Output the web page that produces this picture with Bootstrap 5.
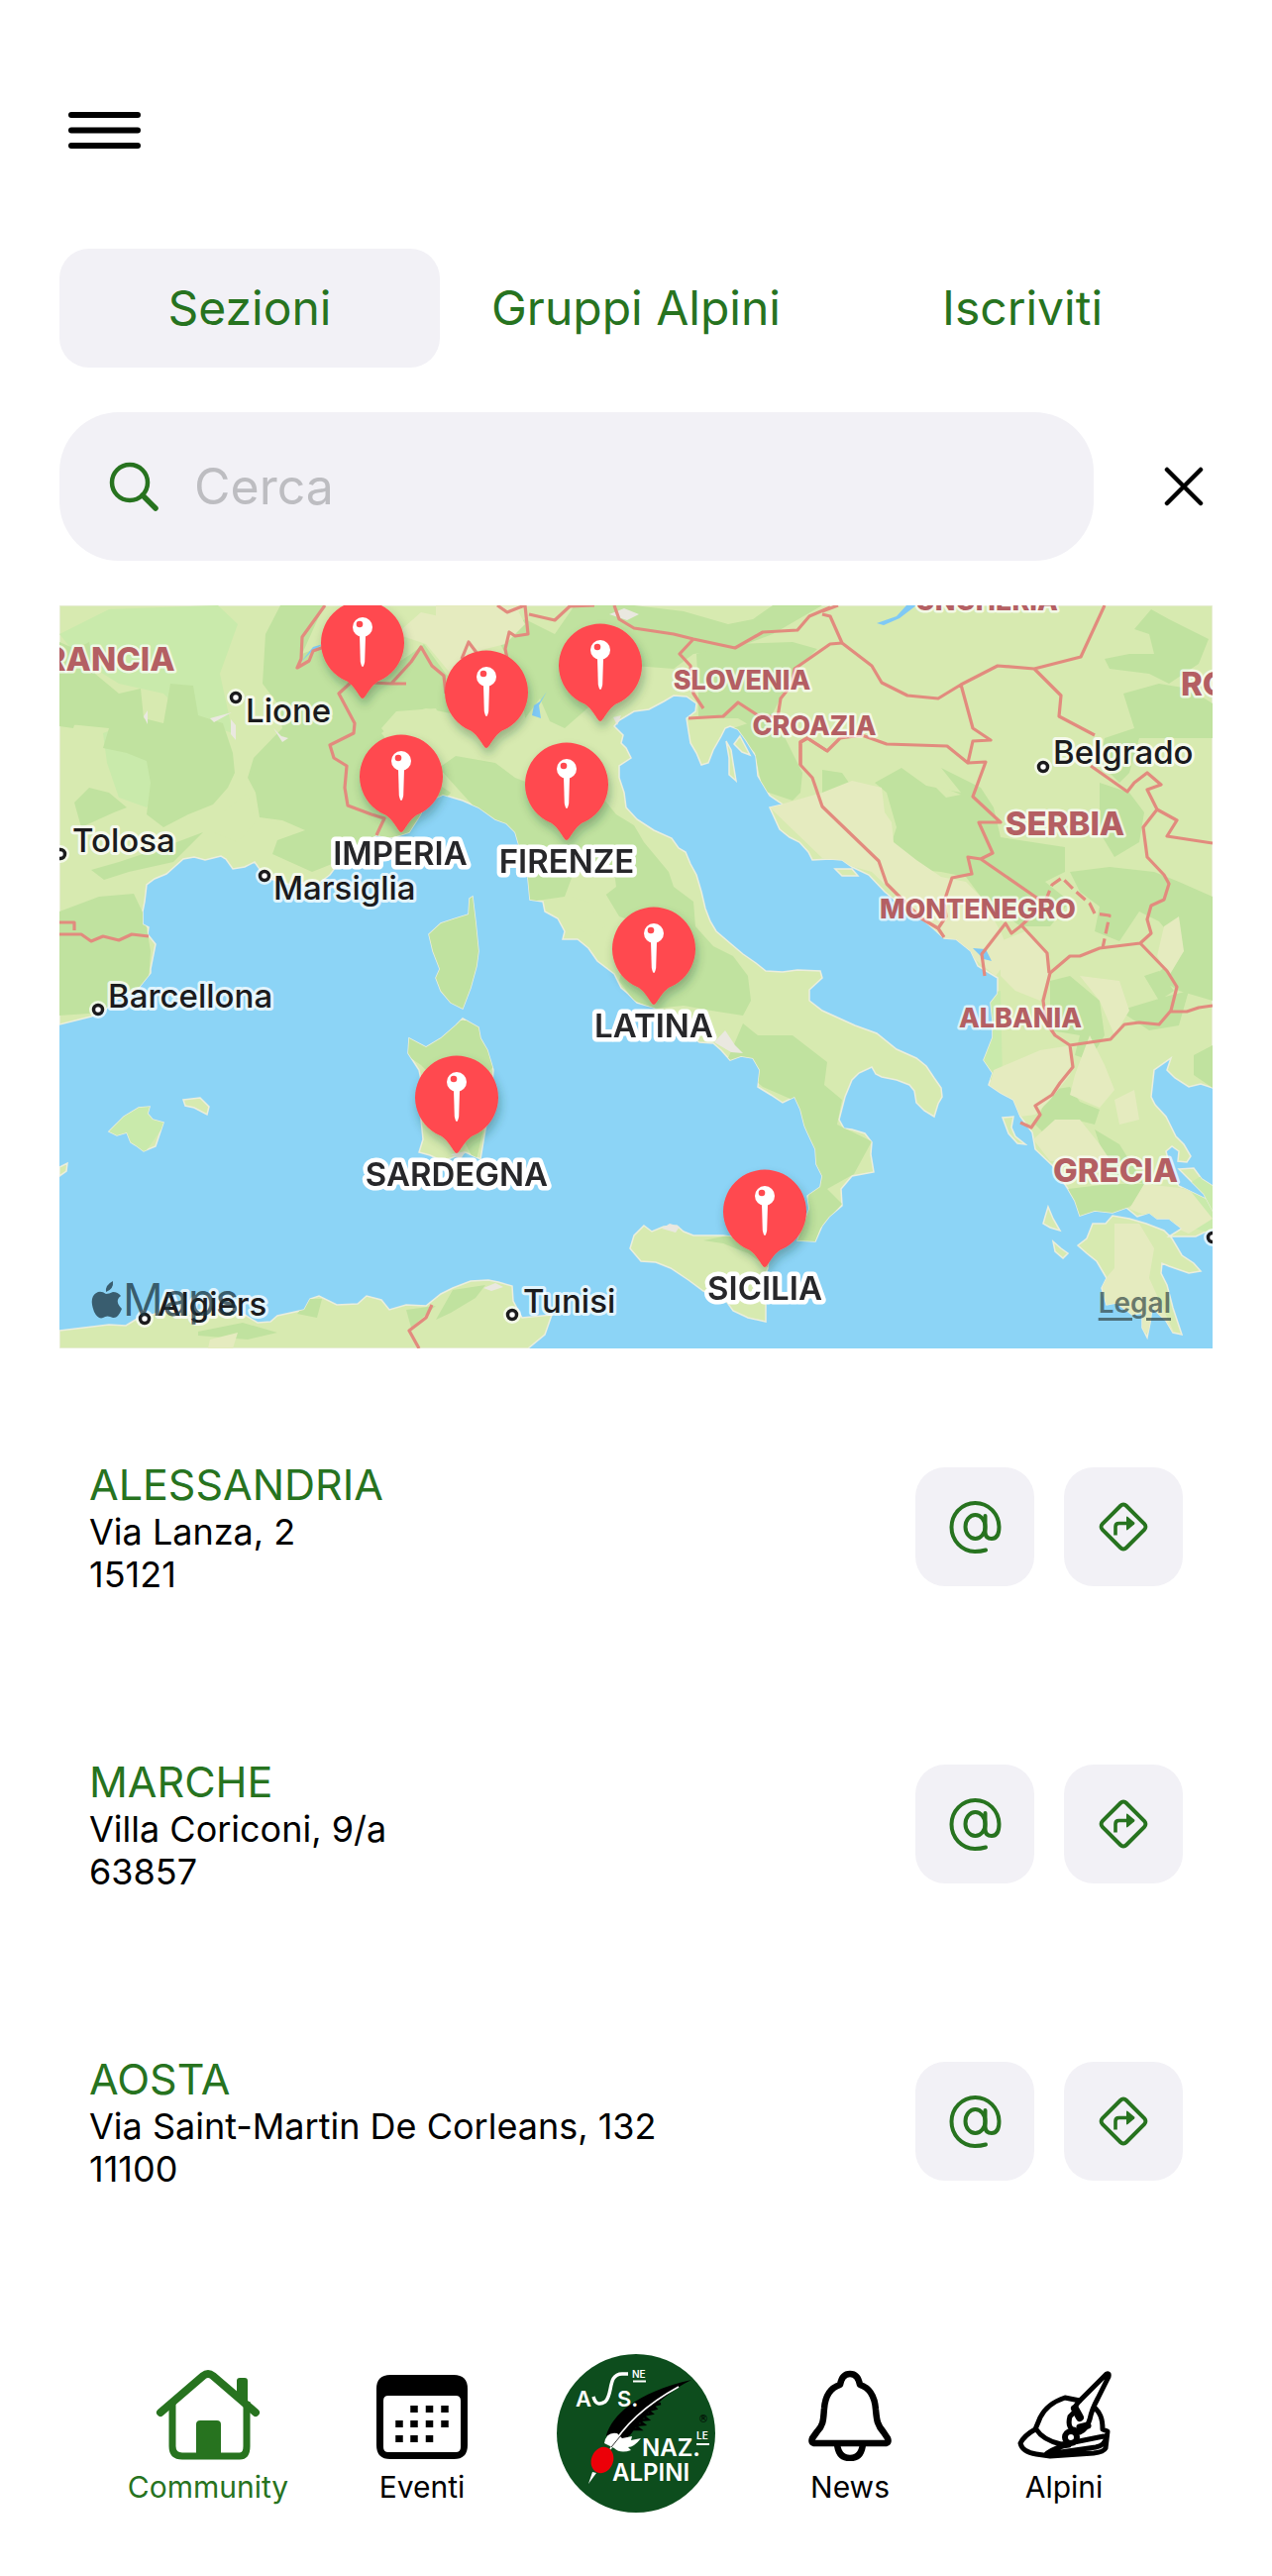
<!DOCTYPE html>
<html lang="it">
<head>
<meta charset="utf-8">
<meta name="viewport" content="width=device-width, initial-scale=1">
<title>Sezioni - Alpini</title>
<link href="https://cdn.jsdelivr.net/npm/bootstrap@5.3.0/dist/css/bootstrap.min.css" rel="stylesheet">
<style>
  :root { --verde: #27731f; --grigio: #f2f1f6; }
  body { font-family: Inter, "Liberation Sans", sans-serif; color: #000; background: #fff; }
  a { text-decoration: none; }
  svg { display: block; }
  .app-head { padding: 104px 60px 0; height: 251px; }
  .menu-btn { width: 90px; height: 56px; }
  .tabs-row { gap: 6px; padding: 0 60px; margin-bottom: 45px; }
  .tab-btn { flex: 1 1 0; height: 120px; border: 0; border-radius: 30px; background: transparent; color: var(--verde); font-size: 48px; line-height: 60px; }
  .tab-btn.active { background: var(--grigio); }
  .search-row { padding: 0 60px; margin-bottom: 45px; }
  .search-box { height: 150px; border-radius: 60px; background: var(--grigio); padding: 0 48px; gap: 34px; margin-right: 66px; }
  .search-box input { border: 0; background: transparent; outline: 0; font-size: 50px; line-height: 64px; padding: 0; color: #000; min-width: 0; }
  .search-box input::placeholder { color: #bdbdc1; opacity: 1; }
  .map-box { margin: 0 60px 30px; height: 750px; overflow: hidden; }
  .legal-link { right: 42px; bottom: 28px; color: rgba(50,70,70,.7); font-size: 28px; line-height: 36px; font-weight: 600; text-decoration: underline; text-decoration-thickness: 3px; text-underline-offset: 5px; }
  .city { font: 500 33px Inter, sans-serif; fill: #1b1b1d; stroke: rgba(255,255,255,.75); stroke-width: 6px; paint-order: stroke; stroke-linejoin: round; }
  .pin-name { font: 600 33px Inter, sans-serif; fill: #27272a; stroke: #fff; stroke-width: 9px; paint-order: stroke; stroke-linejoin: round; text-anchor: middle; }
  .nation { font: 800 27px Inter, sans-serif; fill: #b45f63; stroke: rgba(255,255,255,.7); stroke-width: 5px; paint-order: stroke; stroke-linejoin: round; text-anchor: middle; }
  .nation.big { font-size: 33px; }
  .place { height: 300px; padding: 0 90px; }
  .place h2 { font-size: 43px; line-height: 54px; font-weight: 400; color: var(--verde); margin: 0; }
  .place p { font-size: 36px; line-height: 43px; margin: 0; }
  .place-actions { gap: 30px; }
  .sq-btn { width: 120px; height: 120px; border: 0; border-radius: 30px; background: var(--grigio); color: var(--verde); }
  .bottom-nav { padding: 0 102px; margin-top: 73px; }
  .bottom-nav a { flex: 1 1 0; height: 173px; color: #000; font-size: 30px; line-height: 36px; }
  .bottom-nav a.active { color: var(--verde); }
  .bottom-nav .ico { height: 128px; }
  .ana-logo { margin-top: 12px; }
</style>
<script src="https://cdn.jsdelivr.net/npm/bootstrap@5.3.0/dist/js/bootstrap.bundle.min.js"></script>
</head>
<body>
<header class="app-head">
  <button class="menu-btn btn p-0 border-0 d-flex align-items-center" aria-label="Menu">
    <svg class="ms-2" width="76" height="48" viewBox="0 0 76 48" stroke="#000" stroke-width="6" stroke-linecap="round"><path d="M4 8h67M4 23.500h67M4 39h67"/></svg>
  </button>
</header>

<main>
  <div class="tabs-row d-flex">
    <button class="tab-btn active">Sezioni</button>
    <button class="tab-btn">Gruppi Alpini</button>
    <button class="tab-btn">Iscriviti</button>
  </div>

  <div class="search-row d-flex align-items-center">
    <div class="search-box d-flex align-items-center flex-grow-1">
      <svg class="flex-shrink-0" width="54" height="54" viewBox="0 0 54 54" fill="none" stroke="#27731f" stroke-width="4.500" stroke-linecap="round"><circle cx="23" cy="23" r="18"/><path d="M36 36l13 13" stroke-width="5.500"/></svg>
      <input class="flex-grow-1" type="text" placeholder="Cerca" aria-label="Cerca">
    </div>
    <button class="btn p-0 border-0" aria-label="Chiudi">
      <svg width="54" height="48" viewBox="0 0 54 48" stroke="#000" stroke-width="4.500" stroke-linecap="round"><path d="M8 7l34 34M42 7L8 41"/></svg>
    </button>
  </div>

  <div class="map-box position-relative">
    <svg width="100%" height="750" viewBox="60 611 1164 750" preserveAspectRatio="xMidYMid slice" role="img" aria-label="Mappa delle sezioni">
      <defs>
        <path id="land" d="M60 611V1034L80 1029 92 1026 104 1021 120 1006 140 997 152 982 152 978 157 953 149 943 150 936 144 933 144 920 146 910 148 893 156 887 168 882 176 875 185 867 196 865 207 868 215 866 223 864 228 867 235 877 247 875 257 870 264 880 273 887 293 893 305 891 317 895 333 883 341 872 350 867 364 853 380 843 395 846 413 840 424 823 430 810 447 802 467 808 483 815 500 827 511 831 520 840 525 857 530 868 533 887 535 908 548 910 550 920 563 927 570 940 568 948 583 948 594 957 603 970 620 983 627 997 634 1003 643 1012 660 1017 680 1030 693 1043 706 1052 720 1053 728 1060 737 1070 748 1066 760 1068 767 1080 765 1097 778 1105 790 1113 802 1107 808 1120 812 1136 815 1143 823 1160 824 1175 830 1187 828 1198 815 1207 817 1220 805 1252 823 1253 830 1237 837 1228 850 1217 849 1200 860 1187 882 1183 879 1165 880 1153 873 1144 860 1140 852 1139 847 1130 853 1107 860 1090 867 1083 880 1077 884 1084 890 1087 905 1090 918 1095 923 1101 925 1113 933 1121 943 1127 947 1114 951 1107 950 1098 943 1088 935 1076 925 1068 905 1059 885 1043 863 1035 830 1020 817 1010 817 999 830 987 828 980 805 979 790 981 773 980 763 972 750 963 737 952 723 940 717 930 712 917 708 900 703 883 697 872 692 860 685 856 678 846 660 838 643 827 632 815 630 800 625 785 625 773 637 765 632 755 627 750 629 742 620 733 625 727 640 718 655 716 670 708 680 702 693 703 703 710 702 718 693 725 695 738 697 750 703 760 708 772 715 770 720 757 728 743 732 735 737 733 745 736 753 747 763 763 765 783 777 803 790 812 777 815 787 837 797 845 807 850 816 860 820 868 838 867 850 868 860 875 877 883 893 900 910 914 930 927 942 937 953 947 965 948 980 960 987 975 1007 987 1007 1003 1000 1012 1002 1030 1002 1047 993 1070 1002 1083 998 1095 1010 1103 1023 1110 1030 1127 1042 1143 1045 1160 1063 1177 1078 1200 1085 1212 1090 1227 1105 1222 1123 1224 1137 1219 1148 1228 1160 1224 1168 1230 1180 1230 1193 1240 1180 1248 1207 1248 1224 1240V1223L1217 1210 1190 1197 1182 1182 1177 1162 1183 1157 1190 1162 1189 1172 1198 1173 1202 1167 1195 1155 1187 1147 1177 1127 1166 1115 1162 1107 1165 1080 1182 1068 1178 1080 1186 1088 1200 1097 1212 1094 1224 1098V611ZM650 1237L658 1243 670 1238 683 1237 690 1243 700 1247 730 1247 750 1250 778 1243 775 1280 768 1300 773 1317 773 1334 755 1330 740 1323 733 1313 710 1303 695 1292 677 1280 662 1274 647 1273 636 1260 640 1247ZM467 1028L483 1037 485 1048 492 1060 498 1080 496 1110 490 1140 485 1170 470 1163 460 1167 447 1172 434 1166 423 1163 427 1150 425 1130 427 1100 423 1080 412 1063 413 1048 430 1057 445 1048 460 1035ZM477 905L480 930 483 960 481 975 475 997 467 1018 455 1012 445 1000 440 987 444 978 437 960 433 943 445 932 460 927 473 923 474 907ZM110 1142L125 1127 140 1118 151 1117 149 1124 154 1130 165 1133 160 1148 157 1157 145 1162 137 1156 132 1153 128 1143 118 1146ZM185 1110L202 1108 211 1117 209 1125 196 1118 187 1116ZM60 1178L68 1174 67 1182 60 1187ZM60 1343L85 1340 110 1337 127 1338 140 1330 170 1323 210 1322 247 1327 260 1335 273 1334 280 1328 307 1322 313 1311 322 1308 340 1317 361 1316 370 1308 385 1312 393 1322 410 1317 430 1318 445 1306 457 1300 475 1293 493 1292 503 1294 517 1298 518 1313 527 1330 557 1327 550 1347 533 1361 60 1361ZM1088 1257L1097 1250 1103 1235 1116 1235 1123 1227 1140 1230 1157 1235 1175 1242 1183 1250 1193 1267 1205 1275 1212 1283 1200 1285 1180 1278 1173 1275 1172 1285 1178 1297 1184 1320 1193 1347 1184 1345 1177 1333 1163 1320 1161 1335 1158 1350 1153 1340 1153 1325 1143 1327 1127 1315 1117 1317 1112 1300 1117 1290 1107 1273 1097 1265ZM1190 1180L1205 1179 1213 1190 1224 1197V1222L1215 1205ZM1058 1218L1063 1230 1070 1242 1060 1239 1053 1235 1055 1228ZM1063 1253L1071 1260 1078 1265 1073 1270 1065 1263ZM1012 1128L1023 1127 1021 1138 1025 1147 1035 1155 1027 1154 1018 1144ZM733 748L738 757 740 770 743 788 736 782 736 765ZM747 743L757 762 749 759 741 751ZM843 877L860 877 866 884 850 884Z"/>
        <clipPath id="landClip"><use href="#land"/></clipPath>
        <filter id="pinShade" x="-30%" y="-30%" width="170%" height="170%"><feDropShadow dx="2" dy="6" stdDeviation="5" flood-color="#1c4a35" flood-opacity=".35"/></filter>
        <g id="pin">
          <path d="M0 57C-3 57-8 43-17 39A42 42 0 1 1 17 39C8 43 3 57 0 57Z" fill="#ff4a50"/>
          <circle cy="-15" r="10" fill="#fff"/><circle cx="-3" cy="-18" r="3.300" fill="#ff4a50"/>
          <path d="M-3-7h6l-.8 27Q0 30-2.200 20Z" fill="#fff"/>
        </g>
        <g id="dot"><circle r="7" fill="none" stroke="rgba(255,255,255,.7)" stroke-width="4"/><circle r="4.500" fill="#fff" stroke="#1b1b1d" stroke-width="3.500"/></g>
      </defs>
      <rect x="60" y="611" width="1164" height="750" fill="#8cd4f6"/>
      <use href="#land" fill="#d7eab0" stroke="#ebeedd" stroke-width="1.500"/>

      <g clip-path="url(#landClip)">
        <!-- pale meadows -->
        <path fill="#c9eaab" d="M60 640L110 615 220 611 240 630 222 680 235 740 190 725 165 700 120 690 80 665ZM104 740L130 730 150 745 145 765 160 770 158 800 148 815 120 805 108 770ZM105 1140L140 1110 170 1130 145 1165ZM1150 1225L1224 1180V1245ZM985 1005L1010 1000 1012 1090 990 1090Z"/>
        <!-- woods and mountains -->
        <g fill="#c0e29f">
          <path d="M60 648L76 655 90 648 96 680 120 700 142 695 145 725 165 730 172 690 195 692 200 722 225 730 235 760 237 780 230 795 215 812 190 822 165 835 148 822 152 790 148 768 128 760 104 755 110 735 60 730ZM90 795L110 800 128 815 115 820 82 835 75 810ZM60 715L78 722 74 735 60 733ZM92 878L120 870 165 855 205 840 175 870 130 880 105 888Z"/>
          <path d="M283 611L327 611 305 660 330 650 370 690 415 660 428 650 450 680 470 700 455 720 430 715 412 720 385 740 405 765 440 790 455 800 420 840 380 848 340 870 315 880 275 862 280 848 308 838 285 828 262 825 258 800 250 785 256 765 285 735 280 710 265 690 268 640Z"/>
          <path d="M60 920L100 905 135 902 146 925 152 960 150 990 104 1022 60 1025Z"/>
          <path d="M430 900H500V1025H430ZM410 1030H500V1075L475 1100 490 1130 480 1175 468 1150 440 1090 425 1075 410 1065Z"/>
          <path d="M443 775L460 763 500 770 520 785 560 800 600 795 622 822 640 833 650 850 675 880 680 895 700 910 702 935 720 955 740 965 755 985 758 1010 750 1025 718 1020 690 1015 660 1018 640 1010 625 990 640 930 625 925 610 900 618 890 580 878 570 905 535 910 525 860 510 850 490 827Z"/>
          <path d="M750 1033L765 1045 800 1045 835 1072 832 1095 850 1110 845 1135 880 1152 862 1185 835 1200 850 1215 828 1240 822 1255 800 1253 815 1210 822 1190 800 1110 770 1097 735 1068Z"/>
          <path d="M500 640L530 625 560 640 580 611 640 611 690 617 735 630 760 625 780 611 830 611 780 640 740 655 700 660 680 675 640 672 610 700 570 735 555 728 545 705 530 725 525 680 515 670Z"/>
          <path d="M703 660L740 650 800 648 825 655 800 680 790 700 770 740 745 725 705 725 705 700Z"/>
          <path d="M740 735L770 725 790 740 800 760 810 780 808 800 800 808 770 798 762 760Z"/>
          <path d="M830 777L850 780 857 790 840 800 830 805ZM883 790L910 775 935 793 970 800 950 775 990 795 1003 815 1010 845 1075 855 1075 880 1055 890 1080 910 1060 935 1030 935 990 905 975 885 950 880 930 878 900 850 905 835 895 800ZM902 862L940 855 940 872 920 870Z"/>
          <path d="M1140 660L1165 660 1160 640 1145 635 1162 615 1180 625 1220 645 1210 670 1180 690 1160 680 1120 675 1115 665ZM1134 700L1170 690 1200 695 1224 710V745L1180 745 1150 745 1140 780 1130 790 1110 770 1115 745 1145 735ZM1110 790L1140 800 1155 820 1150 850 1125 865 1110 840Z"/>
          <path d="M1080 880L1120 875 1165 880 1190 890 1224 905V1010L1190 1000 1165 985 1195 960 1170 930 1150 920 1130 950 1105 940 1110 915 1090 900ZM1060 990L1080 985 1110 1010 1115 1045 1100 1070 1085 1065 1090 1045 1060 1040ZM1130 1020L1180 1005 1200 1000 1190 1035 1160 1040ZM1155 985L1170 980 1185 1000 1170 1010ZM1060 1100L1080 1097 1090 1112 1110 1120 1105 1135 1085 1130 1075 1150 1060 1150 1045 1135ZM1078 1200L1120 1195 1155 1195 1145 1215 1125 1226 1090 1230ZM1105 1140L1130 1155 1155 1195 1120 1185ZM1205 1065L1224 1055V1098L1205 1085Z"/>
          <path d="M710 1252L745 1245 778 1243 776 1280 755 1265 730 1255ZM440 1332L457 1302 490 1297 480 1310 455 1325ZM312 1311L325 1311 320 1330 300 1326ZM200 1344L245 1335 280 1345 250 1352 200 1348ZM410 1322L440 1318 415 1340Z"/>
        </g>
        <!-- lowlands inside the woods -->
        <path fill="#d7eab0" d="M385 735L400 718 440 715 450 735 430 760 410 765ZM578 890L620 880 622 895 600 912 575 905ZM582 935L600 920 612 935 595 945ZM225 820L250 800 258 830 240 850 215 840ZM940 790L970 802 955 805Z"/>
        <!-- arid high ground -->
        <path fill="#e5ebbf" d="M400 640L425 618 480 630 520 611 530 630 510 650 470 660 455 680 430 650ZM440 611H530L500 640 470 665 440 660ZM777 815L830 800 860 788 890 795 893 820 900 830 902 850 925 868 950 885 975 890 990 905 1010 940 1020 965 1005 985 980 965 940 938 880 880 830 866ZM1010 950L1035 940 1055 960 1060 980 1050 1010 1025 1000 1010 985ZM1003 1080L1050 1060 1082 1055 1080 1085 1060 1110 1045 1125 1030 1127 998 1100ZM1085 1085L1100 1045 1115 1075 1125 1100 1110 1118 1080 1105ZM1090 985L1130 990 1140 1020 1125 1045 1110 1010ZM1065 1130L1090 1130 1110 1155 1120 1170 1060 1172 1043 1150ZM1125 1110L1145 1100 1150 1130 1130 1135ZM1155 1195L1200 1200 1224 1230 1200 1245 1140 1220ZM1125 1235L1150 1235 1165 1260 1160 1290 1185 1345 1155 1345 1115 1315 1112 1295 1125 1280ZM1175 935L1190 925 1195 960 1180 985 1168 965ZM212 1352L240 1345 235 1361 210 1361Z"/>
      </g>
      <!-- towns -->
      <path fill="#eae8e0" d="M721 1052L732 1040 742 1055 750 1063 738 1062ZM455 1165L470 1162 465 1170ZM145 723l4-6v14ZM212 725l22-6-18 10ZM233 726l5 6v15l-5-6ZM276 735l8 8 7 2-6 4ZM615 620l15-6 15 6-12 6ZM619 724l8-2-4 10ZM668 1240l8-5 10 3-4 6ZM488 1300l12-5 8 4-12 4Z"/>
      <!-- lakes -->
      <path fill="#7fc9f5" d="M552 698L544 712 546 725 537 722 539 712 545 708ZM885 629L905 622 915 611 925 611 908 624 892 631ZM982 957L995 958 1001 970 993 968ZM304 668L316 653 326 650 313 659Z"/>

      <!-- frontiers -->
      <g fill="none" stroke="#e28b7e" stroke-width="3.200" stroke-linejoin="round">
        <path d="M328 611L305 643 304 665 300 674 312 667 316 657 330 652M410 690L395 690 355 688 342 700 358 730 357 740 333 752 337 765 350 773 348 795 351 813 375 822 388 826 380 843M395 690L415 668 425 653 436 672 448 682 450 700M60 931H75V939M60 943L82 943 92 950 104 945 120 949 133 943 150 945"/>
        <path d="M502 611L512 618 522 614 530 611 533 640 520 642 514 638 510 655 512 665M534 620L560 626 575 612 600 611M466 665L473 648 482 660M620 611L625 625 640 634 680 640 700 645 742 654 770 638 805 636 817 622 838 613M700 645L686 660 697 672 700 700 710 715M695 725L730 723 745 709 765 722 785 724 788 705 800 690 802 675 828 657 838 650 850 649M835 758L815 745 808 749 808 772"/>
        <path d="M830 617L846 611M830 620L838 622 850 649 880 672 890 689 916 702 947 705 970 691 1007 672 1044 675 1091 663 1115 611M1044 675L1071 702 1069 723 1105 742M970 691L982 735 1000 747 982 748 977 770 956 753 895 751 870 742 848 745 835 758 815 745 808 749 808 772 820 785 830 814 887 869 895 892 930 927 947 937 953 946M977 770L995 769 982 804 1010 830H988L1002 861 990 867 977 865 981 882 961 886 953 910 955 925 947 937M990 867L1055 912 1030 935 1021 942 1015 932 991 963 994 985M1032 935L1057 962 1059 982"/>
        <path d="M1101 773L1138 799 1145 790 1158 780 1172 792 1158 797 1168 817 1188 828 1178 844 1224 851M1168 817L1154 835 1158 865 1175 883 1180 892 1175 908 1162 914 1158 928 1162 942 1151 952 1110 957 1090 965 1080 965 1060 982 1053 1010 1056 1032 1065 1045 1080 1055 1121 1049 1135 1034 1150 1032 1170 1034 1182 1020 1188 996 1178 980 1151 952M1180 1021H1198L1210 1017 1224 1015M1080 1055L1083 1077 1070 1093 1062 1105 1045 1116 1050 1125 1041 1138 1030 1133M436 1317L430 1330 413 1343 423 1361"/>
        <path stroke-dasharray="12 5" d="M1055 910L1062 893 1072 886 1085 899 1100 912 1105 922 1120 924 1113 957"/>
      </g>

      <text class="nation big" x="101" y="677">FRANCIA</text>
      <text class="nation" x="749" y="696">SLOVENIA</text>
      <text class="nation" x="822" y="742">CROAZIA</text>
      <text class="nation" x="996" y="616">UNGHERIA</text>
      <text class="nation big" x="1075" y="843">SERBIA</text>
      <text class="nation" x="987" y="927">MONTENEGRO</text>
      <text class="nation" x="1030" y="1037">ALBANIA</text>
      <text class="nation big" x="1126" y="1193">GRECIA</text>
      <text class="nation big" x="1274" y="702">ROMANIA</text>

      <use href="#dot" x="238" y="704"/><text class="city" x="248" y="729">Lione</text>
      <use href="#dot" x="61" y="862"/><text class="city" x="73" y="860">Tolosa</text>
      <use href="#dot" x="267" y="884"/><text class="city" x="276" y="908">Marsiglia</text>
      <use href="#dot" x="99" y="1019"/><text class="city" x="109" y="1017">Barcellona</text>
      <use href="#dot" x="146" y="1331"/><text class="city" x="159" y="1328">Algiers</text>
      <use href="#dot" x="517" y="1327"/><text class="city" x="528" y="1325">Tunisi</text>
      <use href="#dot" x="1053" y="774"/><text class="city" x="1063" y="771">Belgrado</text>
      <use href="#dot" x="1224" y="1249"/>

      <!-- map brand, drawn over the city names -->
      <g fill="#1d3641" fill-opacity=".75">
        <path d="M114 1293q1 8-7 11-1-7 7-11ZM107 1306q3 0 7-2 5 0 8 4-7 5 1 13-4 10-9 9-6-3-10 0-5 2-9-6-6-16 4-20 4-1 8 2Z"/>
        <text x="124" y="1328" font-family="Inter" font-size="45">Maps</text>
      </g>

      <g filter="url(#pinShade)">
        <use href="#pin" x="366" y="648"/><use href="#pin" x="606" y="671"/><use href="#pin" x="491" y="698"/><use href="#pin" x="405" y="783"/>
        <use href="#pin" x="572" y="791"/><use href="#pin" x="660" y="957"/><use href="#pin" x="461" y="1107"/><use href="#pin" x="772" y="1222"/>
      </g>
      <text class="pin-name" x="404" y="873">IMPERIA</text>
      <text class="pin-name" x="572" y="881">FIRENZE</text>
      <text class="pin-name" x="660" y="1047">LATINA</text>
      <text class="pin-name" x="461" y="1197">SARDEGNA</text>
      <text class="pin-name" x="772" y="1312">SICILIA</text>
    </svg>
    <a class="legal-link position-absolute" href="#">Legal</a>
  </div>

  <svg width="0" height="0" class="position-absolute" aria-hidden="true">
    <defs>
      <g id="ico-at" fill="none" stroke="currentColor" stroke-width="4" stroke-linecap="round">
        <path d="M38 50.500Q33 52 27 52A24 24.500 0 1 1 51.500 27Q51.500 39 44 39 38 39 37.500 33V16"/><ellipse cx="27.500" cy="27" rx="10" ry="12"/>
      </g>
      <g id="ico-dir"><rect x="10" y="10" width="34" height="34" rx="4" transform="rotate(45 27 27)" fill="none" stroke="currentColor" stroke-width="4"/><path d="M19 35.500V27Q19 23.500 22.500 23.500H31" fill="none" stroke="currentColor" stroke-width="3.600"/><path d="M30 17.500Q30 16 31.500 17L38 22.500Q39 23.500 38 24.500L31.500 30Q30 31 30 29.500Z" fill="currentColor"/></g>
    </defs>
  </svg>

  <section>
    <article class="place d-flex align-items-center justify-content-between">
      <div><h2>ALESSANDRIA</h2><p>Via Lanza, 2</p><p>15121</p></div>
      <div class="place-actions d-flex">
        <button class="sq-btn d-flex align-items-center justify-content-center p-0" aria-label="Email"><svg width="54" height="54"><use href="#ico-at"/></svg></button>
        <button class="sq-btn d-flex align-items-center justify-content-center p-0" aria-label="Indicazioni"><svg width="54" height="54"><use href="#ico-dir"/></svg></button>
      </div>
    </article>
    <article class="place d-flex align-items-center justify-content-between">
      <div><h2>MARCHE</h2><p>Villa Coriconi, 9/a</p><p>63857</p></div>
      <div class="place-actions d-flex">
        <button class="sq-btn d-flex align-items-center justify-content-center p-0" aria-label="Email"><svg width="54" height="54"><use href="#ico-at"/></svg></button>
        <button class="sq-btn d-flex align-items-center justify-content-center p-0" aria-label="Indicazioni"><svg width="54" height="54"><use href="#ico-dir"/></svg></button>
      </div>
    </article>
    <article class="place d-flex align-items-center justify-content-between">
      <div><h2>AOSTA</h2><p>Via Saint-Martin De Corleans, 132</p><p>11100</p></div>
      <div class="place-actions d-flex">
        <button class="sq-btn d-flex align-items-center justify-content-center p-0" aria-label="Email"><svg width="54" height="54"><use href="#ico-at"/></svg></button>
        <button class="sq-btn d-flex align-items-center justify-content-center p-0" aria-label="Indicazioni"><svg width="54" height="54"><use href="#ico-dir"/></svg></button>
      </div>
    </article>
  </section>
</main>

<nav class="bottom-nav d-flex">
  <a href="#" class="active d-flex flex-column align-items-center">
    <span class="ico d-flex align-items-end pb-2"><svg width="108" height="94" viewBox="0 0 108 94">
      <path d="M6 45L49 8q5-4 10 0l43 37" fill="none" stroke="currentColor" stroke-width="8" stroke-linecap="round"/>
      <path d="M18 36V79q0 10 10 10h58q7 0 7-10V34" fill="none" stroke="currentColor" stroke-width="7"/>
      <path d="M83 27V13q0-3 3-3h5q3 0 3 3v24ZM42 89V57q0-4 4-4h17q4 0 4 4v32Z" fill="currentColor"/></svg></span>
    <span>Community</span>
  </a>
  <a href="#" class="d-flex flex-column align-items-center">
    <span class="ico d-flex align-items-end pb-2"><svg width="92" height="92" viewBox="0 0 92 92">
      <path fill-rule="evenodd" d="M14 5H78Q92 5 92 19V76Q92 90 78 90H14Q0 90 0 76V19Q0 5 14 5ZM12 26Q7 26 7 31V78Q7 83 12 83H80Q85 83 85 78V31Q85 26 80 26Z"/>
      <path d="M38 36v7M53.500 36v7M69 36v7M23 51v7M38 51v7M53.500 51v7M69 51v7M23 66v7M38 66v7M53.500 66v7" stroke="#000" stroke-width="7.500"/></svg></span>
    <span>Eventi</span>
  </a>
  <a href="#" aria-label="Associazione Nazionale Alpini" class="d-flex flex-column align-items-center">
    <svg class="ana-logo" width="160" height="160" viewBox="22 26 160 160">
      <circle cx="102" cy="106" r="80" fill="#0d4d1d"/>
      <path d="M72 108C78 88 101 65 158 52 138 62 118 78 96 108L84 118Z" fill="#000"/>
      <path d="M96 102l10 0-5-4 9-1-5-4 9-1-5-4 9-2-4-3 8-2-3-3 8-2" fill="none" stroke="#000" stroke-width="2.500"/>
      <path d="M76 122Q96 86 145 59" fill="none" stroke="#fff" stroke-width="1.600"/>
      <path d="M70 117Q72 105 83 107L88 112 98 110 97 114 107 112Q100 121 94 121L97 124Q86 128 80 122Z" fill="#fff" transform="translate(0 -1)"/>
      <path d="M77 120l9-11" stroke="#333" stroke-width="1"/>
      <ellipse cx="68" cy="133" rx="11" ry="13.500" transform="rotate(22 68 133)" fill="#ec0008"/>
      <path d="M58 145l4 1-8 11Z" fill="#fff"/>
      <g fill="#fff" font-family="Inter, sans-serif" font-weight="600">
        <text x="41" y="79" font-size="22">A</text><text x="83" y="79" font-size="22">S.</text>
        <text x="98" y="50" font-size="10">NE</text><text x="163" y="112" font-size="10">LE</text>
        <text x="108" y="129" font-size="24">NAZ.</text><text x="78" y="154" font-size="24">ALPINI</text>
      </g>
      <path d="M59 69Q62 80 71 74C79 67 73 46 88 46H94" fill="none" stroke="#fff" stroke-width="3.500"/>
      <path d="M99 53.500H112M163 117H176" stroke="#fff" stroke-width="2"/>
      <text x="165" y="95" font-size="10" font-family="DejaVu Sans">®</text></svg>
  </a>
  <a href="#" class="d-flex flex-column align-items-center">
    <span class="ico d-flex align-items-end pb-2"><svg width="84" height="92" viewBox="0 0 84 92" fill="none" stroke="#000" stroke-width="6.500" stroke-linejoin="round">
      <path d="M32 15Q34 4 42 4T52 15C62 18 67 27 68 40 69 50 69 55 76 63L80 69Q82 74 77 74H7Q2 74 4 69L9 62C16 55 15 48 16 39 17 26 22 18 32 15Z"/><path d="M29 74Q30 89 42 89T55 74"/></svg></span>
    <span>News</span>
  </a>
  <a href="#" class="d-flex flex-column align-items-center">
    <span class="ico d-flex align-items-end pb-2"><svg width="96" height="92" viewBox="0 0 96 92" fill="none" stroke="#000" stroke-width="5" stroke-linejoin="round" stroke-linecap="round">
      <path d="M64 31L49 28Q31 34 24 48L19 60Q8 66 4 74 6 83 20 85L34 87 78 84Q88 83 90 79L92 62 87 60C87 48 84 43 79 38M20 60Q27 71 45 75L53 74 88 67M31 84Q42 77 53 76M91 67Q90 76 80 78L38 84"/>
      <path d="M64 31L91 4Q94 3 93 7L82 29Q76 40 74 50 71 60 64 63L58 60M64 31Q58 37 59 42L54 47Q51 58 58 61"/><path d="M59 39L64 48" stroke-width="8"/><path d="M64 58L72 56" stroke-width="7"/>
      <circle cx="55" cy="68" r="6" stroke-width="6"/></svg></span>
    <span>Alpini</span>
  </a>
</nav>
</body>
</html>
